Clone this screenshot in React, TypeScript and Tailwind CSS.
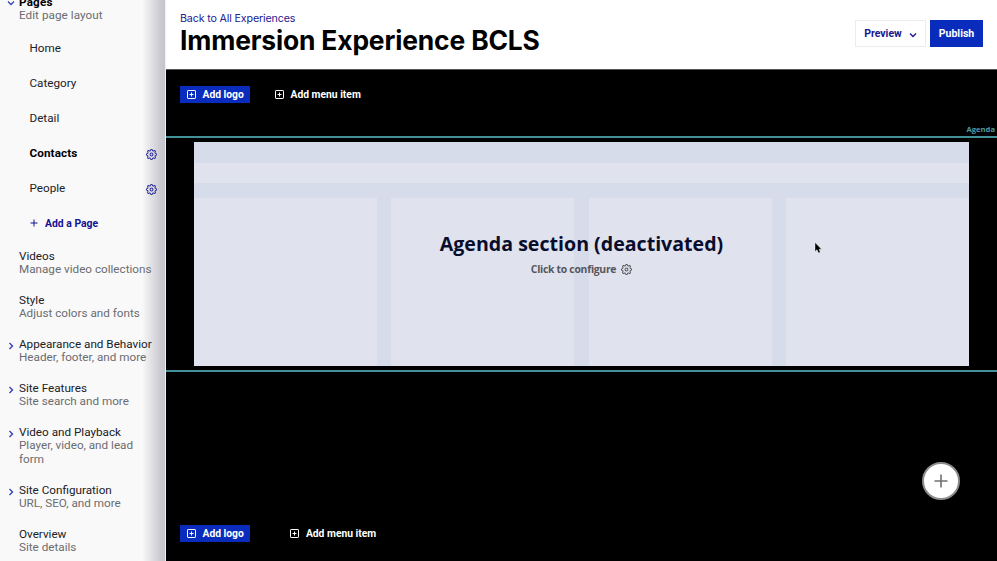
import React from "react";

function gearOutline() {
  const points: string[] = [];
  for (let i = 0; i < 96; i++) {
    const a = (i / 96) * Math.PI * 2;
    const r = 9.8 + 1.3 * Math.tanh(1.8 * Math.cos(8 * a));
    points.push(`${(12 + r * Math.sin(a)).toFixed(2)} ${(12 - r * Math.cos(a)).toFixed(2)}`);
  }
  return `M${points.join("L")}Z`;
}

const gearPath = gearOutline();

function Gear({ className }: { className: string }) {
  return (
    <svg viewBox="0 0 24 24" fill="none" stroke="currentColor" strokeLinejoin="round" className={`h-[11px] w-[11px] shrink-0 overflow-visible ${className}`}>
      <path d={gearPath} />
      <circle cx="12" cy="12" r="3.2" />
    </svg>
  );
}

function Chevron({ down = false, className }: { down?: boolean; className: string }) {
  return (
    <svg width="8" height="8" viewBox="0 0 8 8" fill="none" stroke="currentColor" strokeWidth="1.3" className={className}>
      <path d={down ? "M1 2.5 4 5.5 7 2.5" : "M2.5 1 5.5 4 2.5 7"} />
    </svg>
  );
}

type Page = { name: string; gear?: boolean; active?: boolean };
const pages: Page[] = [
  { name: "Home" },
  { name: "Category" },
  { name: "Detail" },
  { name: "Contacts", gear: true, active: true },
  { name: "People", gear: true },
];

type Section = { title: string; sub: string; open?: boolean };
const sections: Section[] = [
  { title: "Videos", sub: "Manage video collections" },
  { title: "Style", sub: "Adjust colors and fonts" },
  { title: "Appearance and Behavior", sub: "Header, footer, and more", open: true },
  { title: "Site Features", sub: "Site search and more", open: true },
  { title: "Video and Playback", sub: "Player, video, and lead\nform", open: true },
  { title: "Site Configuration", sub: "URL, SEO, and more", open: true },
  { title: "Overview", sub: "Site details" },
];

function Sidebar() {
  return (
    <aside className="h-full w-[166px] shrink-0 overflow-hidden border-r border-[#f0f0f3] bg-[#f9f9f9] bg-[linear-gradient(to_right,transparent_142px,#e2e2e6_151px,#cbcad1_160px,#c5c4cc_165px)] font-['Roboto',sans-serif] text-[11.7px] leading-[13.35px] text-[#202126]">
      <div className="relative -mt-[4px] pl-[19px]">
        <Chevron down className="absolute left-[7px] top-[3px] text-[#3344b0]" />
        <div className="font-bold tracking-[0.2px] text-black">Pages</div>
        <div className="tracking-[0.05px] text-[#6b6c70]">Edit page layout</div>
      </div>
      <nav className="mt-[8px]">
        {pages.map((p) => (
          <div key={p.name} className="flex h-[35px] items-center justify-between pl-[29.5px] pr-[8px]">
            <span className={p.active ? "font-bold tracking-[0.1px] text-black" : ""}>{p.name}</span>
            {p.gear && <Gear className="mt-[3px] stroke-[2.2] text-[#2c2c9a]" />}
          </div>
        ))}
        <div className="flex h-[35px] items-center pl-[30px] text-[10.4px] font-bold text-[#151290]">
          <svg width="8" height="8" viewBox="0 0 8 8" stroke="currentColor" className="mr-[7px]">
            <path d="M4 .5v7M.5 4h7" />
          </svg>
          Add a Page
        </div>
      </nav>
      <div className="mt-[9.1px] flex flex-col gap-[17.4px]">
        {sections.map((s) => (
          <div key={s.title} className="relative pl-[19px]">
            {s.open && <Chevron className="absolute left-[7px] top-[4px] text-[#2c3cb0]" />}
            <div className="whitespace-nowrap">{s.title}</div>
            <div className="whitespace-pre text-[#6b6c70]">{s.sub}</div>
          </div>
        ))}
      </div>
    </aside>
  );
}

function PlusBox() {
  return (
    <svg width="9" height="9" viewBox="0 0 9 9" fill="none" stroke="currentColor" className="shrink-0">
      <rect x=".5" y=".5" width="8" height="8" rx=".6" />
      <path d="M4.5 2.5v4M2.5 4.5h4" />
    </svg>
  );
}

function MenuBar({ gap }: { gap: string }) {
  return (
    <div className={`flex items-center font-['Roboto',sans-serif] text-[10.3px] font-bold leading-[17px] text-white ${gap}`}>
      <button className="flex h-[17px] w-[70px] items-center gap-[6.5px] whitespace-nowrap bg-[#0a2cbc] pl-[7px]">
        <PlusBox />
        <span>Add logo</span>
      </button>
      <button className="flex h-[17px] items-center gap-[6.5px] whitespace-nowrap">
        <PlusBox />
        <span>Add menu item</span>
      </button>
    </div>
  );
}

export default function App() {
  return (
    <div className="relative flex h-[561px] w-[997px] overflow-hidden bg-black">
      <Sidebar />
      <main className="flex min-w-0 flex-1 flex-col">
        <header className="flex h-[70px] shrink-0 justify-between border-b border-[#555] bg-white pl-[14px] pr-[14px] font-['Inter',sans-serif]">
          <div className="pt-[11.6px]">
            <a className="block text-[10.7px] leading-[14px] tracking-[-0.15px] text-[#25208f]">Back to All Experiences</a>
            <h1 className="whitespace-nowrap text-[26.4px] font-bold leading-[29px] tracking-[-0.15px] text-black">Immersion Experience BCLS</h1>
          </div>
          <div className="flex gap-[4px] pt-[20px] font-['Roboto',sans-serif] text-[10.5px] font-bold">
            <button className="flex h-[27px] w-[71px] items-center justify-center gap-[7px] border border-[#ececec] pt-[1px] text-[#191590]">
              Preview
              <Chevron down className="mt-[1px]" />
            </button>
            <button className="h-[27px] w-[53px] bg-[#0a2cbc] pt-[1px] text-white">Publish</button>
          </div>
        </header>
        <div className="h-[66px] pl-[14px] pt-[16px]">
          <MenuBar gap="gap-[25px]" />
          <div className="mt-[21px] pr-[2px] text-right font-['Open_Sans',sans-serif] text-[7.6px] font-bold leading-[10px] text-[#4b9ca6]">Agenda</div>
        </div>
        <section className="flex h-[236px] shrink-0 flex-col border-y-2 border-[#439099] px-[28px] py-[4px]">
          <div className="relative flex flex-1 flex-col bg-[#d6dcea]">
            <div className="mt-[21px] h-[20px] bg-[#e0e2ee]" />
            <div className="mt-[15px] grid flex-1 grid-cols-4 gap-x-[14.7px]">
              <div className="bg-[#e0e2ee]" />
              <div className="bg-[#e0e2ee]" />
              <div className="bg-[#e0e2ee]" />
              <div className="bg-[#e0e2ee]" />
            </div>
            <div className="absolute inset-x-0 top-[88px] flex flex-col items-center font-['Open_Sans',sans-serif] font-bold">
              <h2 className="whitespace-nowrap text-[19.6px] leading-[27px] text-[#080d2b]">Agenda section (deactivated)</h2>
              <div className="mt-[4px] flex items-center gap-[5px] text-[11px] leading-[16px] text-[#56575d]">
                <span className="whitespace-nowrap text-[10.4px] tracking-[-0.28px]">Click to configure</span>
                <Gear className="stroke-[2.2] text-[#56575d]" />
              </div>
            </div>
            <svg width="9" height="12" viewBox="0 0 9 12" className="absolute left-[620px] top-[100px]">
              <path d="M1 .5v9l2-1.8L4.5 11l1.8-.8L5 7.2h2.6z" fill="#000" stroke="#fff" strokeWidth=".4" />
            </svg>
          </div>
        </section>
        <div className="flex flex-1 flex-col justify-between pb-[19px] pl-[14px] pt-[90px]">
          <button className="mr-[37px] flex h-[38px] w-[38px] items-center justify-center self-end rounded-full border-2 border-[#8c8c8c] bg-white">
            <svg width="14" height="14" viewBox="0 0 14 14" stroke="#707070" strokeWidth="1.6">
              <path d="M7 .5v13M.5 7h13" />
            </svg>
          </button>
          <MenuBar gap="gap-[40.4px]" />
        </div>
      </main>
    </div>
  );
}
